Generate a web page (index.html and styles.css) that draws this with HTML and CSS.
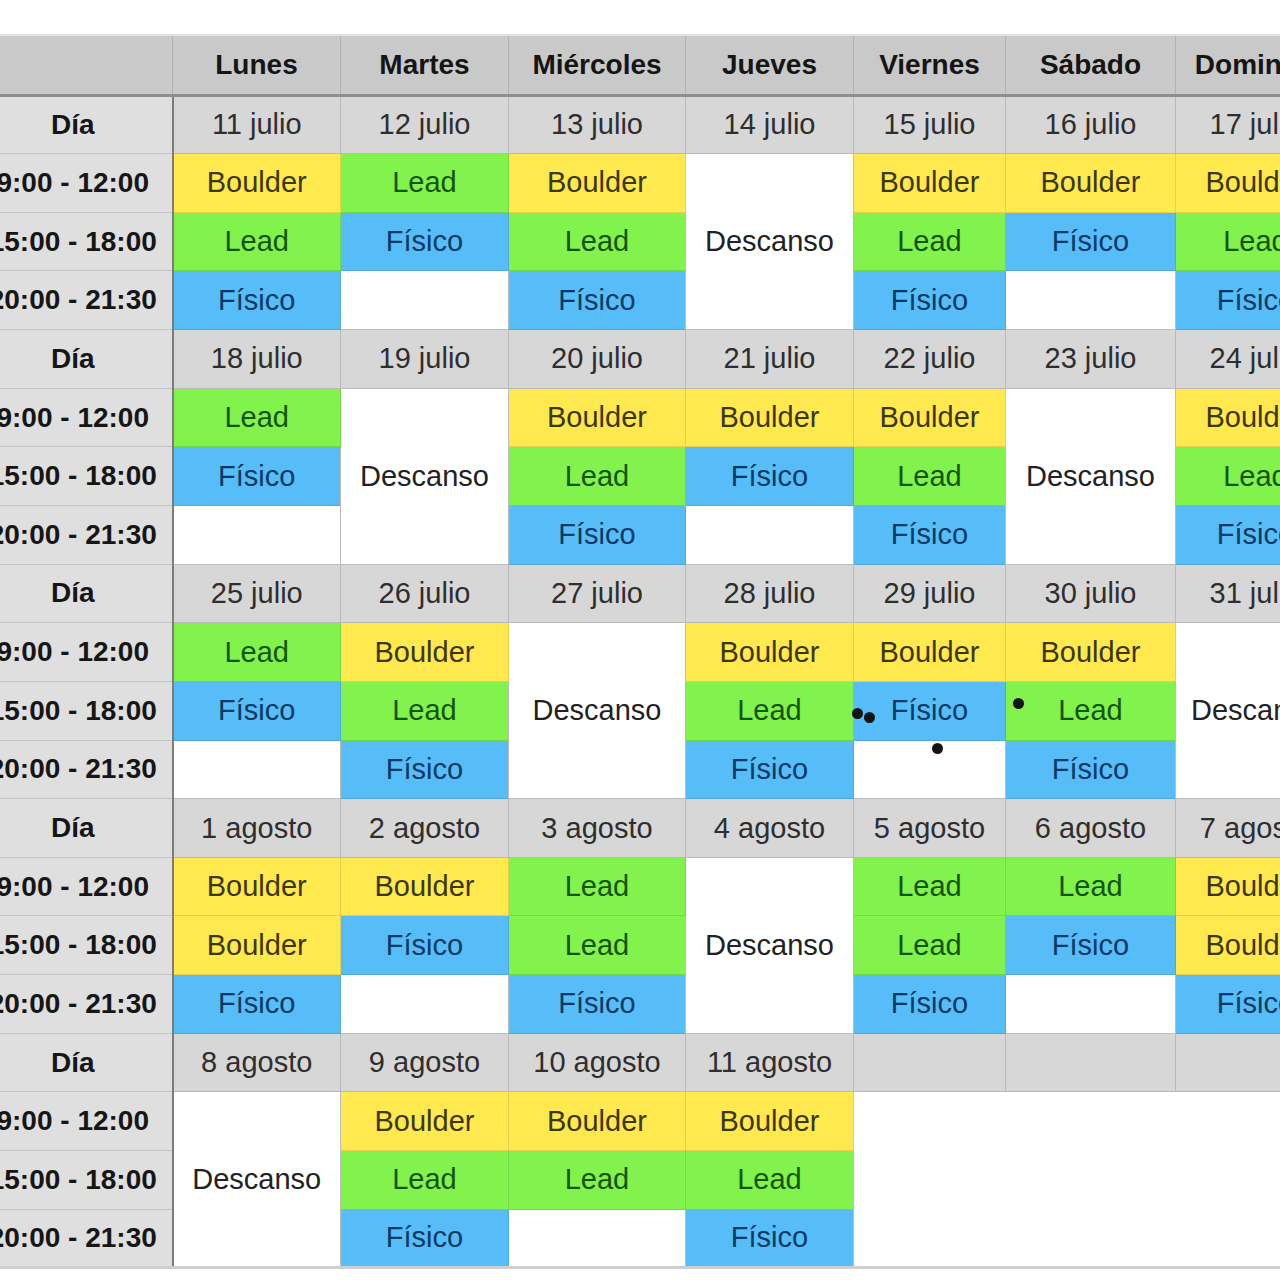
FILE: index.html
```html
<!DOCTYPE html>
<html lang="es">
<head>
<meta charset="utf-8">
<title>Plan de entrenamiento</title>
<link rel="stylesheet" href="styles.css">
</head>
<body>
<div class="page">
<table class="plan">
<colgroup>
<col class="c-left"><col class="c-lun"><col class="c-mar"><col class="c-mie"><col class="c-jue"><col class="c-vie"><col class="c-sab"><col class="c-dom">
</colgroup>
<thead>
<tr class="head"><th class="corner"></th><th>Lunes</th><th>Martes</th><th>Miércoles</th><th>Jueves</th><th>Viernes</th><th>Sábado</th><th>Domingo</th></tr>
</thead>
<tbody>
<tr class="day"><th>Día</th><td>11 julio</td><td>12 julio</td><td>13 julio</td><td>14 julio</td><td>15 julio</td><td>16 julio</td><td>17 julio</td></tr>
<tr><th>9:00 - 12:00</th><td class="b">Boulder</td><td class="l">Lead</td><td class="b">Boulder</td><td class="rest" rowspan="3">Descanso</td><td class="b">Boulder</td><td class="b">Boulder</td><td class="b">Boulder</td></tr>
<tr><th>15:00 - 18:00</th><td class="l">Lead</td><td class="f">Físico</td><td class="l">Lead</td><td class="l">Lead</td><td class="f">Físico</td><td class="l">Lead</td></tr>
<tr><th>20:00 - 21:30</th><td class="f">Físico</td><td class="e"></td><td class="f">Físico</td><td class="f">Físico</td><td class="e"></td><td class="f">Físico</td></tr>

<tr class="day"><th>Día</th><td>18 julio</td><td>19 julio</td><td>20 julio</td><td>21 julio</td><td>22 julio</td><td>23 julio</td><td>24 julio</td></tr>
<tr><th>9:00 - 12:00</th><td class="l">Lead</td><td class="rest" rowspan="3">Descanso</td><td class="b">Boulder</td><td class="b">Boulder</td><td class="b">Boulder</td><td class="rest" rowspan="3">Descanso</td><td class="b">Boulder</td></tr>
<tr><th>15:00 - 18:00</th><td class="f">Físico</td><td class="l">Lead</td><td class="f">Físico</td><td class="l">Lead</td><td class="l">Lead</td></tr>
<tr><th>20:00 - 21:30</th><td class="e"></td><td class="f">Físico</td><td class="e"></td><td class="f">Físico</td><td class="f">Físico</td></tr>

<tr class="day"><th>Día</th><td>25 julio</td><td>26 julio</td><td>27 julio</td><td>28 julio</td><td>29 julio</td><td>30 julio</td><td>31 julio</td></tr>
<tr><th>9:00 - 12:00</th><td class="l">Lead</td><td class="b">Boulder</td><td class="rest" rowspan="3">Descanso</td><td class="b">Boulder</td><td class="b">Boulder</td><td class="b">Boulder</td><td class="rest" rowspan="3">Descanso</td></tr>
<tr><th>15:00 - 18:00</th><td class="f">Físico</td><td class="l">Lead</td><td class="l">Lead</td><td class="f">Físico</td><td class="l">Lead</td></tr>
<tr><th>20:00 - 21:30</th><td class="e"></td><td class="f">Físico</td><td class="f">Físico</td><td class="e"></td><td class="f">Físico</td></tr>

<tr class="day"><th>Día</th><td>1 agosto</td><td>2 agosto</td><td>3 agosto</td><td>4 agosto</td><td>5 agosto</td><td>6 agosto</td><td>7 agosto</td></tr>
<tr><th>9:00 - 12:00</th><td class="b">Boulder</td><td class="b">Boulder</td><td class="l">Lead</td><td class="rest" rowspan="3">Descanso</td><td class="l">Lead</td><td class="l">Lead</td><td class="b">Boulder</td></tr>
<tr><th>15:00 - 18:00</th><td class="b">Boulder</td><td class="f">Físico</td><td class="l">Lead</td><td class="l">Lead</td><td class="f">Físico</td><td class="b">Boulder</td></tr>
<tr><th>20:00 - 21:30</th><td class="f">Físico</td><td class="e"></td><td class="f">Físico</td><td class="f">Físico</td><td class="e"></td><td class="f">Físico</td></tr>

<tr class="day"><th>Día</th><td>8 agosto</td><td>9 agosto</td><td>10 agosto</td><td>11 agosto</td><td></td><td></td><td></td></tr>
<tr><th>9:00 - 12:00</th><td class="rest" rowspan="3">Descanso</td><td class="b">Boulder</td><td class="b">Boulder</td><td class="b">Boulder</td><td class="blank" rowspan="3" colspan="3"></td></tr>
<tr><th>15:00 - 18:00</th><td class="l">Lead</td><td class="l">Lead</td><td class="l">Lead</td></tr>
<tr class="last"><th>20:00 - 21:30</th><td class="f">Físico</td><td class="e"></td><td class="f">Físico</td></tr>
</tbody>
</table>
<span class="dot d1"></span>
<span class="dot d2"></span>
<span class="dot d3"></span>
<span class="dot d4"></span>
</div>
</body>
</html>
```

FILE: styles.css
```css
html, body {
  margin: 0;
  padding: 0;
  background: #ffffff;
  overflow: hidden;
}

.page {
  position: relative;
  padding-top: 34px;
  margin-left: -33px;
  width: 1400px;
  font-family: "Liberation Sans", Arial, sans-serif;
}

.plan {
  border-collapse: collapse;
  table-layout: fixed;
  width: 1368px;
  border-top: 2px solid #e2e2e2;
  border-bottom: 3px solid #cfcfcf;
}

.c-left { width: 205px; }
.c-lun { width: 168px; }
.c-mar { width: 168px; }
.c-mie { width: 177px; }
.c-jue { width: 168px; }
.c-vie { width: 152px; }
.c-sab { width: 170px; }
.c-dom { width: 160px; }

.plan th,
.plan td {
  padding: 0;
  text-align: center;
  vertical-align: middle;
  font-size: 29px;
  line-height: 1;
  white-space: nowrap;
  overflow: hidden;
  border: 1px solid #bdbdbd;
}

.plan tbody tr { height: 58.65px; }
.plan thead tr { height: 60px; }

.head th {
  background: #c9c9c9;
  color: #151515;
  font-weight: bold;
  font-size: 28px;
  border-color: #b2b2b2;
  border-bottom: 3px solid #8f8f8f;
}

.plan tbody th {
  background: #dfdfdf;
  color: #161616;
  font-weight: bold;
  font-size: 28px;
  padding-left: 6px;
  border-color: #c2c2c2 #7c7c7c #c2c2c2 #c2c2c2;
  border-right: 2px solid #7c7c7c;
}

.day td {
  background: #d7d7d7;
  color: #2e2e2e;
  border-color: #b9b9b9;
}

.b {
  background: #ffe94f;
  color: #3d3705;
  border-color: #e6d04a !important;
}

.l {
  background: #82f24c;
  color: #15550b;
  border-color: #72d844 !important;
}

.f {
  background: #56bdf9;
  color: #0b3a64;
  border-color: #4fa9dd !important;
}

.e {
  background: #ffffff;
}

.rest {
  background: #ffffff;
  color: #222222;
}

.blank {
  background: #ffffff;
  border-right: none !important;
  border-bottom: none !important;
}

.dot {
  position: absolute;
  width: 11px;
  height: 11px;
  border-radius: 50%;
  background: #141414;
}

.d1 { left: 885px; top: 708px; }
.d2 { left: 897px; top: 712px; }
.d3 { left: 1046px; top: 698px; }
.d4 { left: 965px; top: 743px; }
```
